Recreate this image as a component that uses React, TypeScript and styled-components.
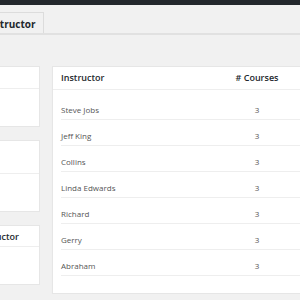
import React from 'react'
import styled, { createGlobalStyle } from 'styled-components'

const GlobalStyle = createGlobalStyle`
  html, body {
    margin: 0;
    padding: 0;
    background: #f1f1f1;
    font-family: 'Open Sans', 'Liberation Sans', sans-serif;
    overflow: hidden;
  }
`

const instructors = [
  'Steve Jobs',
  'Jeff King',
  'Collins',
  'Linda Edwards',
  'Richard',
  'Gerry',
  'Abraham'
]

const App: React.FC = () => {
  return (
    <>
      <GlobalStyle />
      <AdminBar />
      <Page>
        <Tabs>
          <Tab>Instructor</Tab>
        </Tabs>
        <Columns>
          <Side>
            <Box headHeight={22} bodyHeight={37} />
            <Box headHeight={33} bodyHeight={37} />
            <Box headHeight={21} bodyHeight={37} title="Instructor" />
          </Side>
          <Table>
            <HeadRow>
              <span>Instructor</span>
              <span className="num"># Courses</span>
            </HeadRow>
            {instructors.map((name) => (
              <Row key={name}>
                <span>{name}</span>
                <span className="num">3</span>
              </Row>
            ))}
          </Table>
        </Columns>
      </Page>
    </>
  )
}

export default App

const Box: React.FC<{ headHeight: number; bodyHeight: number; title?: string }> = ({
  headHeight,
  bodyHeight,
  title
}) => (
  <Panel>
    <PanelHead h={headHeight}>{title}</PanelHead>
    <PanelBody h={bodyHeight} />
  </Panel>
)

const AdminBar = styled.div`
  height: 5px;
  background: #23282d;
`

const Page = styled.div`
  margin-left: -150px;
  width: 480px;
`

const Tabs = styled.div`
  display: flex;
  padding: 7px 0 0 127px;
  border-bottom: 2px solid #e1e1e1;
`

const Tab = styled.div`
  height: 20px;
  line-height: 22px;
  padding: 0 7px;
  border: 1px solid #dcdcdc;
  border-bottom: none;
  font-size: 10px;
  font-weight: 700;
  color: #23282d;
`

const Columns = styled.div`
  display: flex;
  align-items: flex-start;
  gap: 12px;
  margin-top: 31px;
`

const Side = styled.div`
  width: 190px;
  display: flex;
  flex-direction: column;
  gap: 13px;
`

const Panel = styled.div`
  background: #fff;
  border: 1px solid #e6e6e6;
  border-left: none;
`

const PanelHead = styled.div<{ h: number }>`
  height: ${(p) => p.h}px;
  border-bottom: 1px solid #eeeeee;
  box-sizing: border-box;
  display: flex;
  align-items: center;
  justify-content: flex-end;
  padding: 1px 20px 0 0;
  font-size: 9px;
  font-weight: 600;
  color: #23282d;
`

const PanelBody = styled.div<{ h: number }>`
  height: ${(p) => p.h}px;
`

const Table = styled.div`
  width: 270px;
  background: #fff;
  border: 1px solid #e6e6e6;
  box-shadow: 0 1px 1px rgba(0, 0, 0, 0.04);
  padding: 0 14px 17px 8px;
  box-sizing: border-box;

  .num {
    text-align: center;
  }
`

const HeadRow = styled.div`
  display: grid;
  grid-template-columns: 1fr 100px;
  align-items: center;
  height: 23px;
  border-bottom: 1px solid #eeeeee;
  margin: 0 -14px 0 -8px;
  padding: 0 14px 1px 8px;
  box-sizing: border-box;
  font-size: 9px;
  font-weight: 600;
  color: #23282d;
`

const Row = styled.div`
  display: grid;
  grid-template-columns: 1fr 100px;
  align-items: center;
  height: 26px;
  padding-top: 6px;
  box-sizing: border-box;
  border-bottom: 1px solid #eeeeee;
  font-size: 8px;
  color: #555;

  ${HeadRow} + & {
    height: 30px;
    padding-top: 10px;
  }
`
